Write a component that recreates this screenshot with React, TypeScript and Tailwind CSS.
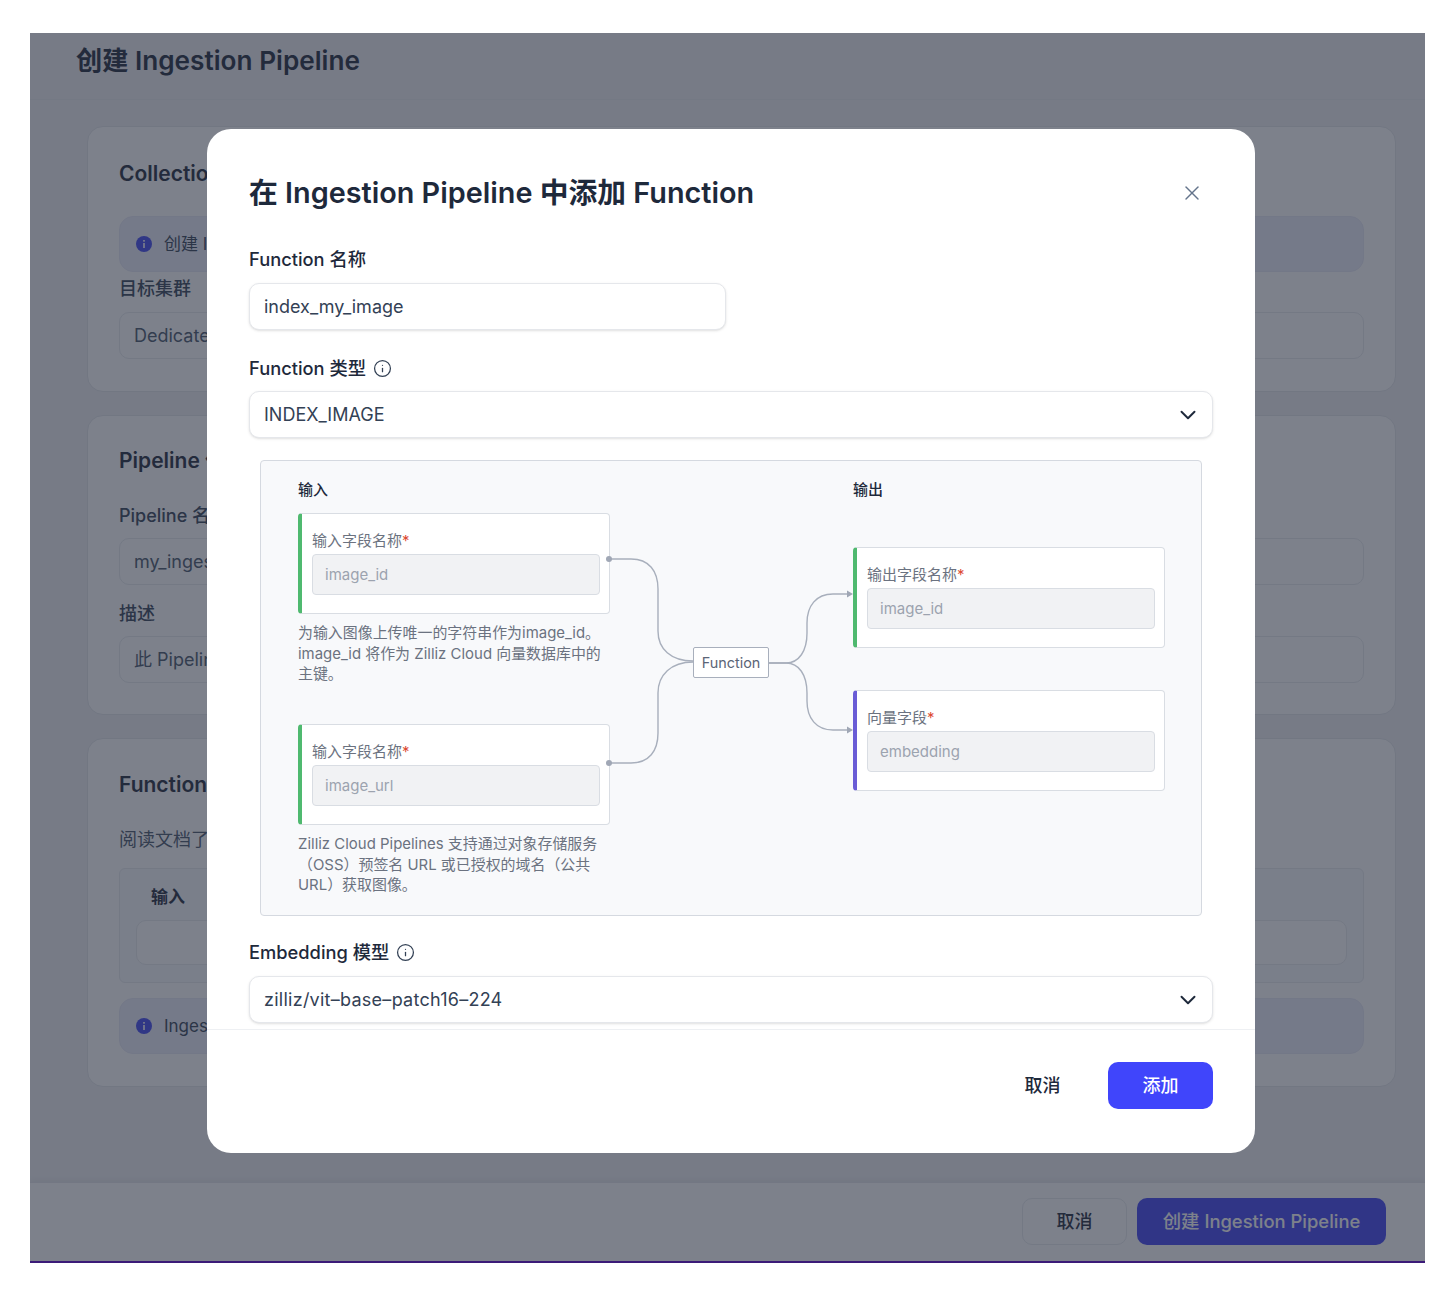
import React from "react";
import { X, ChevronDown, Info } from "lucide-react";

const FONT = "font-[Inter,'Noto_Sans_CJK_SC',sans-serif]";

function AlertDot() {
  return (
    <svg width="16" height="16" viewBox="0 0 16 16" className="shrink-0">
      <circle cx="8" cy="8" r="8" fill="#3f46f0" />
      <rect x="7.2" y="7" width="1.6" height="5" fill="#ffffff" />
      <rect x="7.2" y="4" width="1.6" height="1.7" fill="#ffffff" />
    </svg>
  );
}

function BgAlert({ text }: { text: string }) {
  return (
    <div className="flex h-[56px] items-center gap-[12px] rounded-[14px] border border-[#e6e8f6] bg-[#eceef9] pl-[16px] text-[17px] text-[#334155]">
      <AlertDot />
      <span className="pt-[1px]">{text}</span>
    </div>
  );
}

function BgInput({ text }: { text: string }) {
  return (
    <div className="flex h-[47px] items-center rounded-[10px] border border-[#e8eaee] bg-white pl-[14px] text-[18px] text-[#475569]">
      {text}
    </div>
  );
}

function Background() {
  return (
    <div className="flex h-full flex-col bg-[#eff0f3]">
      <div className="flex h-[67px] shrink-0 items-center border-b border-[#e9ebee] pl-[46px] pb-[10px] text-[26.2px] leading-[36px] font-semibold text-[#1e293b]">
        创建 Ingestion Pipeline
      </div>
      <div className="flex flex-1 flex-col gap-[23px] pl-[57px] pr-[29px] pt-[26px]">
        <div className="h-[266px] rounded-[16px] border border-[#e3e5e9] bg-white px-[31px] pt-[32px]">
          <div className="h-[29px] text-[21px] leading-[30px] font-semibold text-[#1e293b]">Collection</div>
          <div className="mt-[28px]">
            <BgAlert text="创建 Ingestion Pipeline 前请先选择目标集群" />
          </div>
          <div className="mt-[5px] h-[24px] text-[18px] leading-[24px] font-medium text-[#334155]">目标集群</div>
          <div className="mt-[11px]">
            <BgInput text="Dedicated 集群" />
          </div>
        </div>
        <div className="h-[300px] rounded-[16px] border border-[#e3e5e9] bg-white px-[31px] pt-[30px]">
          <div className="h-[29px] text-[21px] leading-[30px] font-semibold text-[#1e293b]">Pipeline 信息</div>
          <div className="mt-[29px] h-[24px] text-[18px] leading-[24px] font-medium text-[#334155]">Pipeline 名称</div>
          <div className="mt-[10px]">
            <BgInput text="my_ingestion_pipeline" />
          </div>
          <div className="mt-[17px] h-[24px] text-[18px] leading-[24px] font-medium text-[#334155]">描述</div>
          <div className="mt-[10px]">
            <BgInput text="此 Pipeline 的描述" />
          </div>
        </div>
        <div className="h-[349px] rounded-[16px] border border-[#e3e5e9] bg-white px-[31px] pt-[31px]">
          <div className="h-[29px] text-[21px] leading-[30px] font-semibold text-[#1e293b]">Function</div>
          <div className="mt-[29px] h-[24px] text-[18px] leading-[24px] text-[#475569]">阅读文档了解更多</div>
          <div className="mt-[16px] h-[115px] rounded-[6px] border border-[#e8eaee] bg-[#f8fafc] px-[16px] pt-[16px]">
            <div className="pl-[15px] text-[17px] leading-[24px] font-semibold text-[#1e293b]">输入</div>
            <div className="mt-[11px] h-[45px] rounded-[10px] border border-[#e8eaee] bg-white" />
          </div>
          <div className="mt-[15px]">
            <BgAlert text="Ingestion Pipeline 创建后无法修改" />
          </div>
        </div>
      </div>
      <div className="flex h-[79px] shrink-0 items-center justify-end gap-[10px] border-t border-[#e5e7eb] bg-white pr-[39px] pb-[1px] shadow-[0_-2px_6px_rgba(0,0,0,0.05)]">
        <div className="flex h-[47px] w-[105px] items-center justify-center rounded-[10px] border border-[#e8eaee] text-[18px] font-medium text-[#1e293b]">
          取消
        </div>
        <div className="flex h-[47px] w-[249px] items-center justify-center rounded-[10px] bg-[#3f43f2] text-[18.4px] font-medium text-white">
          创建 Ingestion Pipeline
        </div>
      </div>
    </div>
  );
}

function FieldLabel({ text, info }: { text: string; info?: boolean }) {
  return (
    <div className="flex h-[24px] items-center gap-[7px] text-[18.3px] leading-[24px] font-medium text-[#1e293b]">
      <span>{text}</span>
      {info && <Info size={19} strokeWidth={1.6} className="text-[#334155]" />}
    </div>
  );
}

function SelectBox({ value, valueClass }: { value: string; valueClass?: string }) {
  return (
    <div className="flex h-[47px] items-center justify-between rounded-[10px] border border-[#e5e7eb] bg-white pl-[14px] pr-[11px] text-[18px] text-[#334155] shadow-sm">
      <span className={valueClass}>{value}</span>
      <ChevronDown size={26} strokeWidth={1.8} className="text-[#1e293b]" />
    </div>
  );
}

function NodeCard({ label, value, bar }: { label: string; value: string; bar: string }) {
  return (
    <div className={`h-[101px] w-[312px] rounded-[4px] border border-l-[4px] border-[#d9dde3] bg-white pl-[10px] pr-[9px] pt-[17px] ${bar}`}>
      <div className="h-[20px] text-[15px] leading-[20px] text-[#6b7280]">
        {label}
        <span className="text-[#dc4a32]">*</span>
      </div>
      <div className="mt-[3px] flex h-[41px] items-center rounded-[4px] border border-[#d9dde3] bg-[#f1f2f4] pl-[12px] pt-[2px] text-[15px] text-[#9ca3af]">
        {value}
      </div>
    </div>
  );
}

function Diagram() {
  return (
    <div className="relative mx-[11px] mt-[22px] flex h-[456px] rounded-[4px] border border-[#d5d9e0] bg-[#f8f9fb] pl-[37px] pt-[19px]">
      <div className="w-[312px]">
        <div className="h-[20px] text-[15px] leading-[20px] font-medium text-[#1e293b]">输入</div>
        <div className="mt-[13px]">
          <NodeCard label="输入字段名称" value="image_id" bar="border-l-[#4fb96f]" />
        </div>
        <div className="mt-[9px] h-[62px] text-[14.95px] leading-[20.5px] text-[#6b7280]">
          为输入图像上传唯一的字符串作为image_id。 image_id 将作为 Zilliz Cloud 向量数据库中的主键。
        </div>
        <div className="mt-[39px]">
          <NodeCard label="输入字段名称" value="image_url" bar="border-l-[#4fb96f]" />
        </div>
        <div className="mt-[9px] text-[14.95px] leading-[20.5px] text-[#6b7280]">
          Zilliz Cloud Pipelines 支持通过对象存储服务（OSS）预签名 URL 或已授权的域名（公共 URL）获取图像。
        </div>
      </div>
      <div className="ml-[243px] w-[312px]">
        <div className="h-[20px] text-[15px] leading-[20px] font-medium text-[#1e293b]">输出</div>
        <div className="mt-[47px]">
          <NodeCard label="输出字段名称" value="image_id" bar="border-l-[#4fb96f]" />
        </div>
        <div className="mt-[42px]">
          <NodeCard label="向量字段" value="embedding" bar="border-l-[#6a5cd6]" />
        </div>
      </div>
      <svg className="absolute inset-0" width="940" height="454" viewBox="0 0 940 454" fill="none">
        <g stroke="#a8afbc" strokeWidth="1.4">
          <path d="M348 98H370C388 98 397 110 397 128V170C397 188 410 200 432 200" />
          <path d="M348 302H370C388 302 397 290 397 272V232C397 214 410 201 432 201" />
          <path d="M508 202H525C538 202 546 190 546 172V162C546 145 555 133 572 133H587" />
          <path d="M508 202H525C538 202 546 214 546 232V240C546 257 555 269 572 269H587" />
        </g>
        <g fill="#a0a7b5">
          <circle cx="348" cy="98" r="3" />
          <circle cx="348" cy="302" r="3" />
          <path d="M586 129.5L592 133L586 136.5Z" />
          <path d="M586 265.5L592 269L586 272.5Z" />
        </g>
      </svg>
      <div className="absolute left-[432px] top-[186px] flex h-[31px] w-[76px] items-center justify-center rounded-[2px] border border-[#a8afbc] bg-white text-[14.4px] text-[#5b6577]">
        Function
      </div>
    </div>
  );
}

function Modal() {
  return (
    <div className="absolute left-[177px] top-[96px] flex h-[1024px] w-[1048px] flex-col overflow-hidden rounded-[24px] bg-white">
      <div className="h-[901px] shrink-0 overflow-hidden border-b border-[#eef0f3] px-[42px] pt-[45px]">
        <div className="flex h-[36px] items-center justify-between">
          <div className="pt-[2px] text-[28.8px] leading-[36px] font-semibold text-[#1e293b]">在 Ingestion Pipeline 中添加 Function</div>
          <X size={24} strokeWidth={1.4} className="mr-[9px] mt-[2px] text-[#64748b]" />
        </div>
        <div className="mt-[37px]">
          <FieldLabel text="Function 名称" />
        </div>
        <div className="mt-[12px] flex h-[47px] w-[477px] items-center rounded-[10px] border border-[#e5e7eb] bg-white pl-[14px] text-[18px] text-[#334155] shadow-sm">
          index_my_image
        </div>
        <div className="mt-[26px]">
          <FieldLabel text="Function 类型" info />
        </div>
        <div className="mt-[11px]">
          <SelectBox value="INDEX_IMAGE" />
        </div>
        <Diagram />
        <div className="mt-[24px]">
          <FieldLabel text="Embedding 模型" info />
        </div>
        <div className="mt-[12px]">
          <SelectBox value="zilliz/vit–base–patch16–224" valueClass="tracking-[0.26px]" />
        </div>
      </div>
      <div className="flex flex-1 items-start justify-end pr-[42px] pt-[32px]">
        <div className="flex h-[47px] w-[105px] items-center justify-center text-[18px] font-medium text-[#1e293b]">取消</div>
        <div className="ml-[13px] flex h-[47px] w-[105px] items-center justify-center rounded-[10px] bg-[#4045fb] text-[18px] font-medium text-white">
          添加
        </div>
      </div>
    </div>
  );
}

export default function App() {
  return (
    <div className={`h-[1293px] w-[1455px] overflow-hidden bg-white px-[30px] pt-[33px] ${FONT}`}>
      <div className="relative h-[1230px] overflow-hidden border-b-2 border-[#3b1a78]">
        <Background />
        <div className="absolute inset-0 bg-[rgba(38,45,62,0.6)]" />
        <Modal />
      </div>
    </div>
  );
}
